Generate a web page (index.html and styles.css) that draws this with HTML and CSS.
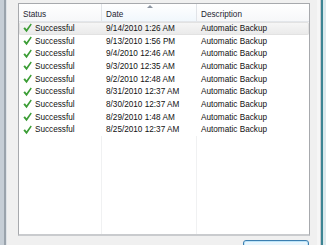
FILE: index.html
```html
<!DOCTYPE html>
<html lang="en">
<head>
  <meta charset="UTF-8" />
  <title>Backups</title>
  <link rel="stylesheet" href="styles.css">
</head>
<body>

  <div class="window">
    <div class="frame-left"></div>

    <div class="client">
      <div class="listview">
        <div class="lv-header">
          <div class="col-head">Status</div>
          <div class="col-head sorted">Date<span class="sort-arrow"></span></div>
          <div class="col-head">Description</div>
        </div>

        <div class="lv-body" id="rows"></div>

        <div class="lv-filler">
          <div class="filler-col"></div>
          <div class="filler-col"></div>
          <div class="filler-col last"></div>
        </div>
      </div>

      <div class="button-row">
        <button class="btn btn-default">View Backups</button>
      </div>
    </div>

    <div class="frame-right"></div>
  </div>

  <script>
    const backups = [
      "9/14/2010 1:26 AM",
      "9/13/2010 1:56 PM",
      "9/4/2010 12:46 AM",
      "9/3/2010 12:35 AM",
      "9/2/2010 12:48 AM",
      "8/31/2010 12:37 AM",
      "8/30/2010 12:37 AM",
      "8/29/2010 1:48 AM",
      "8/25/2010 12:37 AM"
    ];

    const check = `<svg class="check" width="9" height="10" viewBox="0 0 9 10">
      <path d="M0.4 5.6 L1.9 4.3 L3.5 6.2 L7.7 0.6 L8.8 1.5 L3.6 9.2 Z" fill="#3b9d35"/>
    </svg>`;

    document.getElementById("rows").innerHTML = backups.map((date, i) => `
      <div class="lv-row${i === 0 ? ' selected' : ''}">
        <div class="cell status">${check}<span>Successful</span></div>
        <div class="cell">${date}</div>
        <div class="cell">Automatic Backup</div>
      </div>
    `).join("");
  </script>

</body>
</html>
```

FILE: styles.css
```css
/* General */
html, body {
  margin: 0;
  height: 245px;
  overflow: hidden;
}

body {
  font-family: "Liberation Sans", Arial, sans-serif;
  font-size: 8.2px;
  color: #111;
  background: #f0f0f0;
}

.window {
  display: flex;
  height: 245px;
}

/* Window frame */
.frame-left {
  width: 7px;
  background: linear-gradient(to right, #c6ced6 0, #c6ced6 4px, #9aa3ac 4px, #9aa3ac 6px, #dfe3e7 6px);
}

.frame-right {
  width: 9px;
  background: linear-gradient(to right, #f6f6f6 0, #f6f6f6 3px, #c9cdd1 3px, #c9cdd1 4px, #3c8493 4px, #3c8493 6px, #dbe9ec 6px);
}

/* Client area */
.client {
  flex: 1;
  display: flex;
  flex-direction: column;
  padding: 3px 7px 0 11px;
}

/* List view */
.listview {
  flex-shrink: 0;
  height: 230px;
  border: 1px solid #a7a9ad;
  border-bottom: 2px solid #c9cbce;
  background: white;
  display: flex;
  flex-direction: column;
}

.lv-header,
.lv-row,
.lv-filler {
  display: grid;
  grid-template-columns: 83px 95px 1fr;
}

.lv-header {
  height: 17px;
  border-bottom: 1px solid #e3e6ea;
  background: linear-gradient(to bottom, #ffffff, #f6f7f9);
}

.col-head {
  padding: 6px 0 0 4px;
  border-right: 1px solid #e1e4e8;
  color: #1e2530;
  position: relative;
}

.col-head:last-child {
  border-right: none;
}

.col-head.sorted {
  background: linear-gradient(to bottom, #ffffff, #f1f7fc);
}

.sort-arrow {
  position: absolute;
  top: 1px;
  left: 45px;
  width: 0;
  height: 0;
  border-left: 3px solid transparent;
  border-right: 3px solid transparent;
  border-bottom: 3px solid #8d96a2;
}

.lv-row {
  height: 12.7px;
  align-items: center;
}

.lv-row.selected {
  background: linear-gradient(to bottom, #f7f7f7, #e9e9e9);
  border-radius: 2px;
  box-shadow: inset 0 0 0 1px #e2e2e2;
}

.cell {
  padding-left: 4px;
  white-space: nowrap;
}

.cell.status {
  display: flex;
  align-items: center;
  gap: 3px;
}

.check {
  display: block;
}

.lv-filler {
  flex: 1;
}

.filler-col {
  border-right: 1px solid #f0f1f2;
}

.filler-col.last {
  border-right: none;
}

/* Buttons */
.button-row {
  flex-shrink: 0;
  display: flex;
  justify-content: flex-end;
  padding-top: 4px;
}

.btn {
  width: 66px;
  height: 22px;
  margin-right: 1px;
  font-family: "Liberation Sans", Arial, sans-serif;
  font-size: 8px;
  color: #1e1e1e;
  border-radius: 3px;
  padding-top: 2px;
}

.btn-default {
  border: 1px solid #3c7fb1;
  background: linear-gradient(to bottom, #eaf6fd, #d9f0fc);
  box-shadow: inset 0 0 0 1px #bde4f8;
}
```
